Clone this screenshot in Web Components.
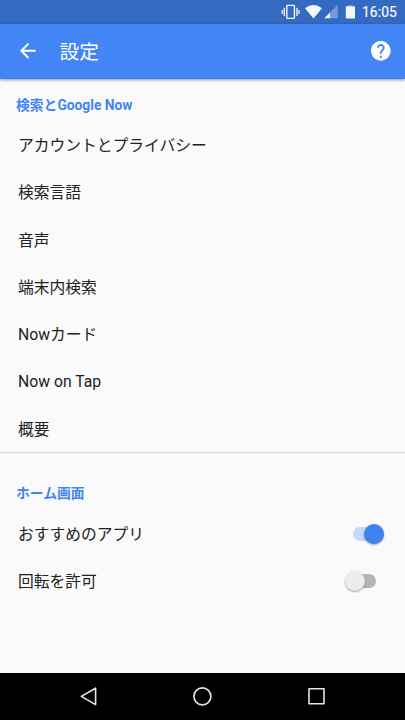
<!DOCTYPE html>
<html lang="ja">
<head>
<meta charset="utf-8">
<title>設定</title>
<style>
html,body{margin:0;height:100%;background:#fafafa}
body{font-family:Roboto,"Noto Sans CJK JP",sans-serif;overflow:hidden}
</style>
</head>
<body>
<settings-screen></settings-screen>
<script>
const define = (name, html) => {
  const tpl = document.createElement('template');
  tpl.innerHTML = html;
  customElements.define(name, class extends HTMLElement {
    constructor() {
      super();
      this.attachShadow({mode: 'open'}).append(tpl.content.cloneNode(true));
    }
  });
};

define('status-bar', `
<style>
:host{display:flex;align-items:center;height:23.6px;background:#356ac3;color:#fff;padding-right:8px;box-sizing:border-box;justify-content:flex-end}
svg{display:block;flex:none}
span{font-size:13.8px;line-height:16px;color:#f6f8fd;margin-top:1px;width:35px;letter-spacing:.1px;-webkit-text-stroke:.2px #f6f8fd}
</style>
<svg width="82" height="23.6" viewBox="280 0 82 23.6">
<g fill="#f4f7fd">
<rect x="281.6" y="10" width="1.2" height="4"/><rect x="283.6" y="7.8" width="1.3" height="8.2"/>
<rect x="296.3" y="7.8" width="1.3" height="8.2"/><rect x="298.4" y="10" width="1.2" height="4"/>
<path d="M305 8.2Q313.5 1.8 322 8.2L313.5 18.4Z"/>
<path d="M324.3 18.2L330 12.5V18.2Z"/>
<path d="M345.8 6.3H355V18.5H345.8Z"/>
</g>
<path d="M348 5H352.7V6.3H348Z" fill="#fff" fill-opacity=".32"/>
<path d="M330 12.5L337.8 4.7V18.2H330Z" fill="#fff" fill-opacity=".32"/>
<rect x="286.8" y="5.4" width="7.6" height="13" rx=".7" fill="none" stroke="#f4f7fd" stroke-width="1.4"/>
</svg><span>16:05</span>`);

define('app-bar', `
<style>
:host{display:flex;align-items:center;height:55.1px;box-sizing:border-box;padding:0 12.2px 0 16px;background:#4285f4;color:#fff;box-shadow:0 1px 3px rgba(0,0,0,.42);position:relative}
h1{font-size:19.7px;line-height:24px;font-weight:400;margin:0 0 0 20px;padding-top:3px;flex:1}
svg{display:block;flex:none}
</style>
<svg width="23.6" height="23.6" viewBox="0 0 24 24" fill="#fff"><path d="M20 11H7.83l5.59-5.59L12 4l-8 8 8 8 1.41-1.41L7.83 13H20v-2z"/></svg>
<h1><slot></slot></h1>
<svg width="23.6" height="23.6" viewBox="0 0 24 24" fill="#fff"><path d="M12 2C6.48 2 2 6.48 2 12s4.48 10 10 10 10-4.48 10-10S17.52 2 12 2zm1 17h-2v-2h2v2zm2.07-7.75l-.9.92C13.45 12.9 13 13.5 13 15h-2v-.5c0-1.1.45-2.1 1.17-2.83l1.24-1.26c.37-.36.59-.86.59-1.41 0-1.1-.9-2-2-2s-2 .9-2 2H8c0-2.21 1.79-4 4-4s4 1.79 4 4c0 .88-.36 1.68-.93 2.25z"/></svg>`);

define('settings-section', `
<style>
:host{display:block}
h2{margin:0;padding:0 16px 6.4px;height:42.8px;box-sizing:border-box;display:flex;align-items:flex-end;font-size:13.8px;line-height:20px;font-weight:700;color:#4285f4}
:host([spaced]) h2{height:56.4px;padding-bottom:7.5px}
:host([divided])::after{content:"";display:block;height:1px;background:#dcdcdc;border-bottom:1px solid #ebebeb;margin-bottom:-.2px}
</style>
<h2><slot name="title"></slot></h2><slot></slot>`);

define('settings-row', `
<style>
:host{display:flex;align-items:center;justify-content:space-between;height:47.25px;padding:0 20px 0 18px;font-size:15.75px;line-height:24px;color:#212121}
.label{padding-top:2px}
</style>
<span class="label"><slot></slot></span><slot name="control"></slot>`);

define('toggle-switch', `
<style>
:host{display:flex;align-items:center;width:40px;height:20px}
.track{width:31px;height:14px;border-radius:7px;background:#b5b5b5;display:flex;align-items:center;margin-right:9px}
.thumb{width:20px;height:20px;border-radius:50%;background:#ececec;flex:none;box-shadow:0 1px 2px rgba(0,0,0,.36)}
:host(:not([checked])) .track{width:29px;margin-left:2px}
:host(:not([checked])) .thumb{margin-left:-2px}
:host([checked]) .track{background:#c6d9f8;margin:0 1px 0 8px}
:host([checked]) .thumb{background:#4182ee;margin-left:11px}
</style>
<div class="track"><div class="thumb"></div></div>`);

define('nav-bar', `
<style>
:host{display:grid;grid-template-columns:repeat(3,114px);justify-content:center;justify-items:center;align-items:center;height:47.5px;background:#000;padding-right:1px}
svg{display:block}
</style>
<svg width="24" height="24" viewBox="-.4 -.4 24 24" fill="none" stroke="#e4e4e4" stroke-width="1.6" stroke-linejoin="round"><path d="M4.9 12L19.2 3.8V20.2Z"/></svg>
<svg width="24" height="24" viewBox="-.4 -.4 24 24" fill="none" stroke="#e4e4e4" stroke-width="1.6"><circle cx="12" cy="12" r="8.5"/></svg>
<svg width="24" height="24" viewBox="-.4 -.4 24 24" fill="none" stroke="#e4e4e4" stroke-width="1.6" stroke-linejoin="round"><rect x="4.6" y="4.4" width="15" height="15"/></svg>`);

define('settings-screen', `
<style>
:host{display:flex;flex-direction:column;height:720px;width:405px;background:#fafafa}
status-bar,app-bar,nav-bar{flex:none}
main{flex:1;min-height:0}
</style>
<status-bar></status-bar>
<app-bar>設定</app-bar>
<main>
<settings-section divided>
<span slot="title">検索とGoogle Now</span>
<settings-row>アカウントとプライバシー</settings-row>
<settings-row>検索言語</settings-row>
<settings-row>音声</settings-row>
<settings-row>端末内検索</settings-row>
<settings-row>Nowカード</settings-row>
<settings-row>Now on Tap</settings-row>
<settings-row>概要</settings-row>
</settings-section>
<settings-section spaced>
<span slot="title">ホーム画面</span>
<settings-row>おすすめのアプリ<toggle-switch slot="control" checked></toggle-switch></settings-row>
<settings-row>回転を許可<toggle-switch slot="control"></toggle-switch></settings-row>
</settings-section>
</main>
<nav-bar></nav-bar>`);
</script>
</body>
</html>
